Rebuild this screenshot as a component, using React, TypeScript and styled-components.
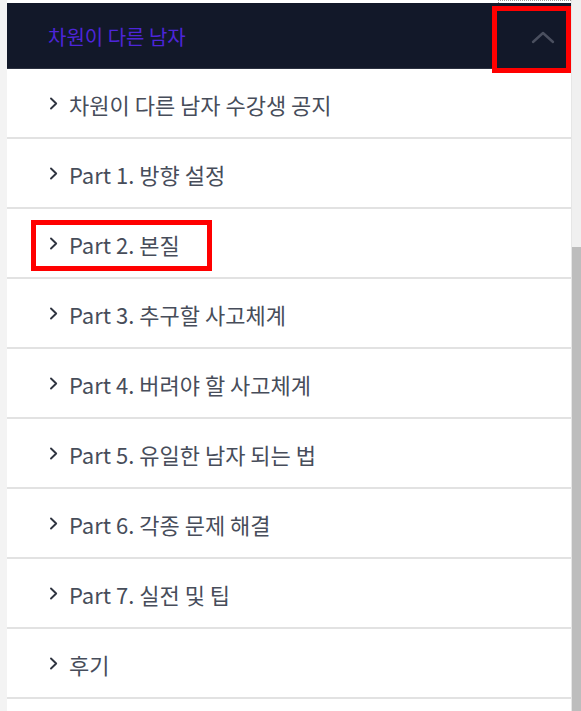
import React from "react";
import styled, { createGlobalStyle } from "styled-components";

const GlobalStyle = createGlobalStyle`
  html, body { margin: 0; padding: 0; background: #ffffff; }
  body { font-family: "Noto Sans CJK KR", "Noto Sans", sans-serif; }
  * { box-sizing: border-box; }
`;

const Page = styled.div`
  display: flex;
  width: 581px;
  height: 711px;
  overflow: hidden;
`;

const Gutter = styled.div`
  width: 7px;
  flex: none;
  background: #f3f3f3;
`;

const Panel = styled.div`
  position: relative;
  flex: 1;
  display: flex;
  flex-direction: column;
  background: #ffffff;
`;

const TopStrip = styled.div`
  height: 3px;
  flex: none;
  display: flex;
  justify-content: flex-end;
`;

const FocusRing = styled.div`
  width: 73px;
  height: 3px;
  border-top: 1px dotted #9a9a9a;
  border-left: 1px dotted #9a9a9a;
`;

const Header = styled.div`
  height: 66px;
  flex: none;
  display: flex;
  align-items: center;
  justify-content: space-between;
  background: #121829;
  padding: 2px 16px 0 41px;
  border-bottom: 1px solid #2c3140;
`;

const Title = styled.span`
  color: #4d25d9;
  font-size: 20px;
  line-height: 1;
`;

const Toggle = styled.span`
  display: flex;
  align-items: center;
  justify-content: center;
  width: 24px;
  height: 24px;
`;

const List = styled.ul`
  list-style: none;
  margin: 0;
  padding: 0;
`;

const Row = styled.li`
  height: 70px;
  display: flex;
  align-items: center;
  gap: 11px;
  padding-left: 42px;
  border-bottom: 2px solid #e2e2e2;
  color: #474d5a;
  font-size: 22px;
`;

const Label = styled.span`
  line-height: 1;
  padding-top: 2px;
`;

const Callout = styled.div<{ $x: number; $y: number; $w: number; $h: number }>`
  position: absolute;
  left: ${(p) => p.$x}px;
  top: ${(p) => p.$y}px;
  width: ${(p) => p.$w}px;
  height: ${(p) => p.$h}px;
  border: 5px solid #ff0000;
  pointer-events: none;
`;

const ScrollTrack = styled.div`
  width: 10px;
  flex: none;
  display: flex;
  flex-direction: column;
  padding-top: 247px;
  background: #f0f0f0;
  border-left: 1px solid #e6e6e6;
`;

const ScrollThumb = styled.div`
  flex: 1;
  background: #bdbdbd;
`;

const Chevron = () => (
  <svg width="9" height="15" viewBox="0 0 9 15" fill="none">
    <path d="M2 2.5 L7.2 7.5 L2 12.5" stroke="#2f3440" strokeWidth="1.9" strokeLinecap="round" strokeLinejoin="round" />
  </svg>
);

const ChevronUp = () => (
  <svg width="24" height="14" viewBox="0 0 24 14" fill="none">
    <path d="M2 12 L12 3 L22 12" stroke="#4a4f5f" strokeWidth="2.4" strokeLinecap="round" strokeLinejoin="round" />
  </svg>
);

const items = [
  "차원이 다른 남자 수강생 공지",
  "Part 1. 방향 설정",
  "Part 2. 본질",
  "Part 3. 추구할 사고체계",
  "Part 4. 버려야 할 사고체계",
  "Part 5. 유일한 남자 되는 법",
  "Part 6. 각종 문제 해결",
  "Part 7. 실전 및 팁",
  "후기",
];

export default function App() {
  return (
    <>
      <GlobalStyle />
      <Page>
        <Gutter />
        <Panel>
          <TopStrip>
            <FocusRing />
          </TopStrip>
          <Header>
            <Title>차원이 다른 남자</Title>
            <Toggle>
              <ChevronUp />
            </Toggle>
          </Header>
          <List>
            {items.map((t) => (
              <Row key={t}>
                <Chevron />
                <Label>{t}</Label>
              </Row>
            ))}
          </List>
          <Callout $x={485} $y={6} $w={79} $h={67} />
          <Callout $x={24} $y={220} $w={181} $h={51} />
        </Panel>
        <ScrollTrack>
          <ScrollThumb />
        </ScrollTrack>
      </Page>
    </>
  );
}
